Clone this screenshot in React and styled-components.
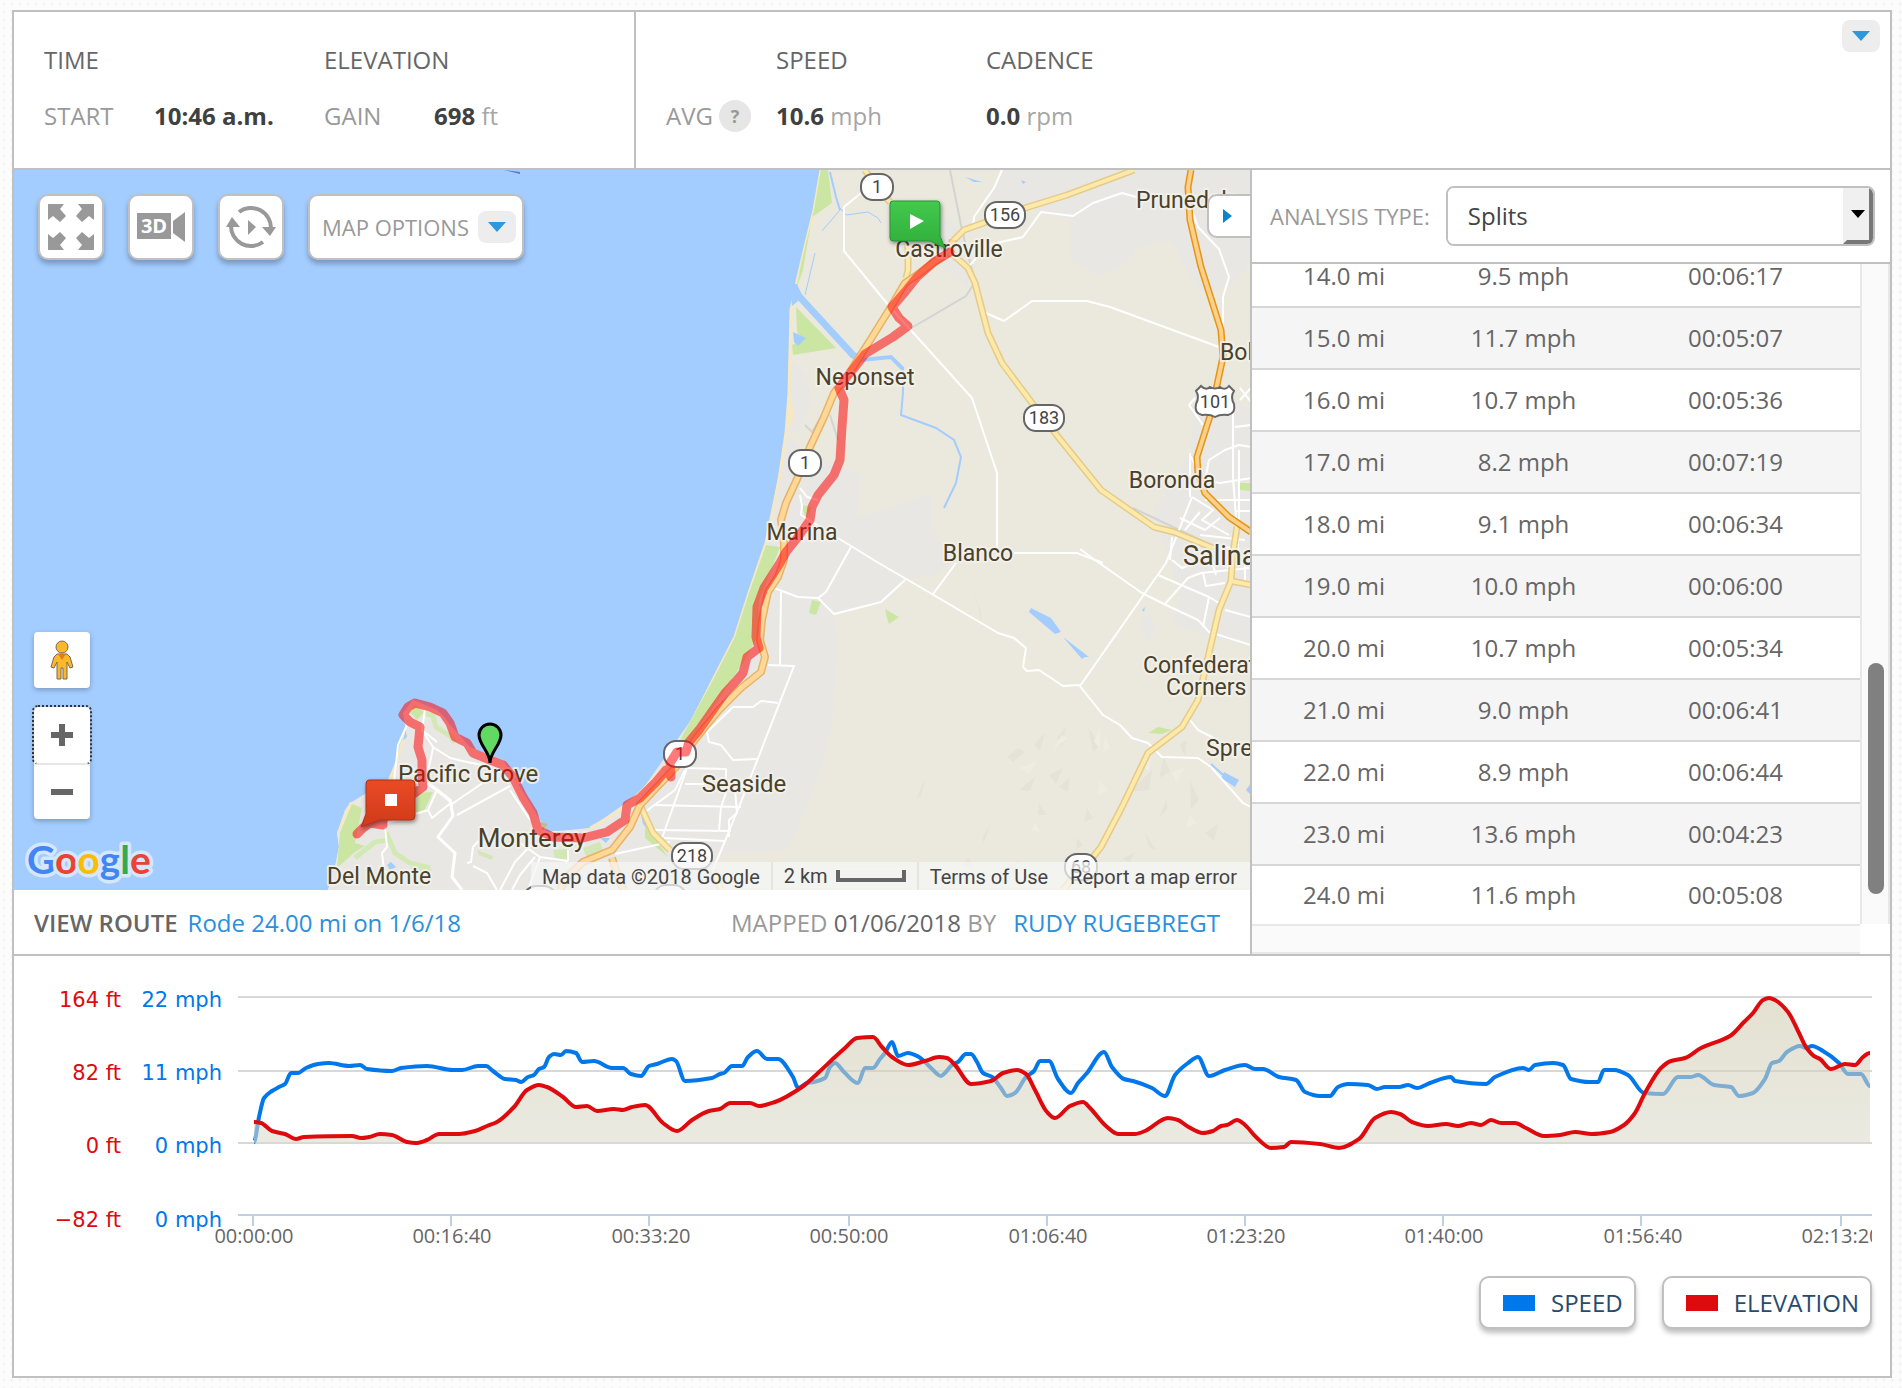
import React, { useState } from "react";
import styled, { createGlobalStyle } from "styled-components";

const splits = [
  ["14.0 mi", "9.5 mph", "00:06:17"],
  ["15.0 mi", "11.7 mph", "00:05:07"],
  ["16.0 mi", "10.7 mph", "00:05:36"],
  ["17.0 mi", "8.2 mph", "00:07:19"],
  ["18.0 mi", "9.1 mph", "00:06:34"],
  ["19.0 mi", "10.0 mph", "00:06:00"],
  ["20.0 mi", "10.7 mph", "00:05:34"],
  ["21.0 mi", "9.0 mph", "00:06:41"],
  ["22.0 mi", "8.9 mph", "00:06:44"],
  ["23.0 mi", "13.6 mph", "00:04:23"],
  ["24.0 mi", "11.6 mph", "00:05:08"],
];

const speedData =
  "254,1142 259,1117 264,1098 272,1091 279,1087 285,1084 291,1073 298,1073 306,1068 318,1064 329,1063 349,1066 360,1065 367,1069 392,1071 401,1068 427,1066 453,1070 462,1070 478,1066 486,1066 493,1071 505,1079 516,1080 521,1082 528,1077 534,1075 539,1069 544,1067 549,1057 554,1054 561,1055 566,1051 576,1053 582,1062 594,1061 612,1068 623,1068 631,1074 641,1076 649,1066 657,1064 672,1059 676,1061 685,1081 712,1078 720,1074 724,1073 732,1066 742,1066 748,1057 757,1051 767,1059 778,1059 793,1077 798,1088 807,1083 814,1082 825,1078 830,1067 835,1063 844,1072 858,1083 865,1068 873,1068 880,1059 885,1053 892,1042 898,1056 908,1053 919,1057 925,1062 931,1068 941,1076 945,1073 952,1065 958,1062 966,1054 971,1054 977,1062 983,1073 992,1077 1001,1088 1007,1096 1015,1093 1026,1077 1034,1071 1040,1061 1049,1061 1058,1079 1071,1093 1078,1083 1087,1073 1104,1052 1112,1067 1124,1079 1133,1081 1152,1088 1165,1096 1175,1075 1188,1063 1198,1057 1209,1076 1225,1070 1245,1065 1255,1069 1263,1069 1279,1077 1296,1080 1305,1092 1320,1096 1330,1096 1338,1087 1348,1084 1368,1085 1377,1089 1385,1087 1399,1087 1408,1085 1417,1088 1430,1083 1451,1077 1455,1081 1486,1084 1495,1077 1523,1068 1529,1070 1535,1065 1553,1063 1563,1065 1571,1079 1590,1082 1598,1082 1604,1070 1614,1070 1628,1075 1644,1093 1663,1094 1678,1077 1691,1077 1698,1075 1714,1085 1731,1087 1739,1096 1753,1093 1765,1079 1772,1063 1779,1061 1787,1052 1800,1046 1806,1048 1812,1046 1823,1051 1839,1063 1848,1074 1861,1074 1870,1086";

const elevationData =
  "254,1122 261,1123 272,1131 285,1134 296,1139 304,1137 352,1136 361,1138 369,1137 380,1134 392,1135 407,1142 416,1143 427,1140 439,1134 459,1134 475,1131 487,1126 497,1122 514,1107 527,1090 539,1085 547,1087 563,1097 576,1107 587,1106 597,1111 614,1109 623,1110 632,1107 645,1105 663,1123 677,1131 692,1120 709,1111 720,1109 730,1103 750,1103 759,1106 775,1102 802,1087 818,1073 835,1057 845,1048 857,1038 873,1037 882,1047 892,1057 908,1065 925,1061 939,1057 947,1058 955,1065 971,1084 991,1081 1003,1073 1017,1070 1026,1074 1035,1090 1047,1112 1055,1118 1070,1106 1083,1102 1090,1108 1106,1126 1118,1134 1135,1134 1145,1131 1168,1118 1178,1120 1187,1126 1203,1133 1213,1131 1221,1126 1227,1125 1237,1120 1245,1125 1256,1137 1271,1148 1284,1147 1291,1142 1320,1144 1339,1148 1359,1139 1375,1118 1391,1112 1400,1114 1412,1122 1428,1126 1446,1124 1458,1126 1471,1123 1481,1125 1491,1120 1501,1123 1515,1123 1526,1128 1544,1136 1560,1135 1575,1132 1592,1134 1610,1132 1624,1125 1635,1113 1645,1093 1661,1068 1671,1061 1685,1058 1701,1048 1730,1036 1744,1022 1753,1013 1763,1000 1769,998 1775,1000 1788,1012 1799,1033 1806,1047 1814,1056 1820,1059 1831,1069 1845,1064 1855,1065 1863,1057 1870,1053";

// monotone cubic through "x,y x,y ..." points
const smooth = (data) => {
  const p = data.split(" ").map((s) => s.split(",").map(Number));
  const slope = (i) => (p[i + 1][1] - p[i][1]) / (p[i + 1][0] - p[i][0]);
  const tangent = p.map((_, i) => {
    if (i === 0 || i === p.length - 1) return 0;
    const a = slope(i - 1);
    const b = slope(i);
    return a * b <= 0 ? 0 : (2 * a * b) / (a + b);
  });
  let d = `M${p[0][0]} ${p[0][1]}`;
  for (let i = 1; i < p.length; i++) {
    const h = (p[i][0] - p[i - 1][0]) / 3;
    d += `C${p[i - 1][0] + h} ${p[i - 1][1] + tangent[i - 1] * h} ${p[i][0] - h} ${p[i][1] - tangent[i] * h} ${p[i][0]} ${p[i][1]}`;
  }
  return d;
};

const yAxis = [
  { y: 1007, ft: "164 ft", mph: "22 mph" },
  { y: 1080, ft: "82 ft", mph: "11 mph" },
  { y: 1153, ft: "0 ft", mph: "0 mph" },
  { y: 1227, ft: "−82 ft", mph: "0 mph" },
];

const xAxis = [
  "00:00:00",
  "00:16:40",
  "00:33:20",
  "00:50:00",
  "01:06:40",
  "01:23:20",
  "01:40:00",
  "01:56:40",
  "02:13:20",
];

const localRoads = [
  "M1002 170L994 188 974 217 973 227",
  "M861 193L844 207V251L890 307 972 398 997 473V550",
  "M966 266L970 265 988 245 1023 237 1041 212 1073 216 1093 203 1122 193 1140 198",
  "M986 313L1004 321 1032 301H1087L1110 307 1219 347",
  "M1190 205L1198 227 1219 249 1229 277 1223 297V330",
  "M1014 553H1077L1103 563",
  "M1080 549L1095 560 1142 593 1166 605 1198 620 1209 632 1251 645",
  "M838 538L877 562 932 594 998 633 1014 638 1026 648 1023 667 1027 671 1039 670 1063 686 1079 685 1091 700 1103 715 1120 725 1132 738 1148 743 1162 757 1198 758 1211 767 1243 803 1251 807",
  "M1080 686L1166 563 1192 497",
  "M774 588L798 597 818 598 834 614 881 602 905 580",
  "M851 547L826 592 818 598",
  "M956 563L933 594",
  "M781 592L780 665M768 665L794 666 739 807 713 870",
  "M778 703L761 701 753 707H733L707 732 709 742 721 745 733 760 757 759",
  "M685 768L726 769V787M685 784H704M654 805L741 807M654 830L731 831M664 838L725 841",
  "M687 768L662 838M727 790L721 807 719 830M735 790L737 813 729 820V837",
  "M685 770L675 790 645 812",
  "M1190 720L1198 730 1218 740",
  "M800 495L802 506 801 515 838 538M800 488L807 497 818 500",
];

const cityStreets = [
  "M1192 497L1213 510 1202 520 1229 535",
  "M1180 518L1205 530 1220 518M1172 537L1170 560",
  "M1185 530L1200 512",
  "M1190 453V497M1190 455L1203 480",
  "M1233 400V477L1239 560",
  "M1251 447L1239 445 1225 450 1209 460 1205 480 1220 483 1251 478",
  "M1235 427L1251 425M1195 398L1189 405 1203 425M1240 400L1251 388M1240 388L1251 402",
  "M1239 450V527M1205 500H1251M1236 511H1251",
  "M1158 575L1209 597 1219 603",
  "M1164 605L1188 578 1201 573 1249 568",
  "M1209 597L1203 627M1225 610L1251 617",
  "M1172 560L1182 568 1202 560M1203 573L1206 586 1225 583",
  "M1210 555L1216 575M1222 548L1228 568M1245 560V580",
  "M1190 545L1235 548M1200 535L1245 540",
];

const peninsulaRoads = [
  "M425 710L422 730 433 747 450 758 467 762 487 766",
  "M422 730L437 742M433 748L427 777M407 725L398 745 394 782",
  "M427 783L452 803V815M452 804L487 780 503 768M457 815L510 786",
  "M387 823L428 810 432 818 452 802M428 810L437 790",
  "M385 827L387 847 382 853 384 870 390 877",
  "M533 843L515 862 500 890M520 843L540 857 568 861",
  "M487 832L473 847 471 862 467 863M473 866L487 873 497 890",
  "M535 857L520 875 512 890M540 857L528 890M568 850V861",
  "M615 854L670 842M510 790L530 820",
];

const places = [
  { x: 949, y: 257, label: "Castroville" },
  { x: 865, y: 385, label: "Neponset" },
  { x: 802, y: 540, label: "Marina" },
  { x: 978, y: 561, label: "Blanco" },
  { x: 1172, y: 488, label: "Boronda" },
  { x: 744, y: 792, label: "Seaside", size: 24 },
  { x: 468, y: 782, label: "Pacific Grove", size: 24 },
  { x: 532, y: 847, label: "Monterey", size: 26 },
  { x: 379, y: 884, label: "Del Monte" },
];

// these run out of the right edge of the map
const edgePlaces = [
  { x: 1136, y: 208, label: "Prunedale" },
  { x: 1220, y: 360, label: "Bolsa" },
  { x: 1183, y: 565, label: "Salinas", size: 27 },
  { x: 1143, y: 673, label: "Confederate" },
  { x: 1166, y: 695, label: "Corners" },
  { x: 1206, y: 756, label: "Spreckels" },
];

const shields = [
  { x: 877, y: 187, label: "1" },
  { x: 1005, y: 215, label: "156" },
  { x: 1044, y: 418, label: "183" },
  { x: 805, y: 463, label: "1" },
  { x: 680, y: 754, label: "1" },
  { x: 692, y: 856, label: "218" },
  { x: 1081, y: 867, label: "68" },
  { x: 540, y: 899, label: "" },
  { x: 670, y: 898, label: "" },
];

const ridePath =
  "M950 252L934 262 917 277 905 292 892 307 899 318 908 326 893 337 865 354 855 367 846 378 839 388 844 400 842 427 840 460 834 475 818 495 812 507 810 520 798 537 786 552 780 563 764 588 757 607 756 637 759 648 747 657 743 673 737 680 725 693 713 710 699 730 689 742 686 752 677 752 670 763 671 777 666 770 656 782 640 798 627 805 625 820 607 832 583 838 553 837 538 830 533 813 523 797 513 777 503 765 490 760 473 753 467 743 455 737 450 723 443 713 430 707 415 703 408 707 403 715 410 722 420 727 418 747 422 760V777L423 787 415 793 400 798 383 805 383 825 370 823 363 828 357 834";

const coast =
  "M821 170L814 210 805 247 800 270 795 290 792 310 790 360 789 393 786 433 779 480 772 517 766 543 759 563 749 593 735 637 713 680 691 720 679 747 664 767 640 793 617 813 590 828 580 830 547 832 538 823 530 803 523 795 513 777 503 760 487 756 470 747 453 735 447 720 437 710 413 700 403 713 406 723 407 737 400 743 397 758 395 770 388 780 367 803 350 803 345 810 337 833 339 847 335 867 328 890";

const yellowRoads = [
  "M865 170L877 188 890 202M908 243V270L906 278",
  "M640 805L653 833 670 850M713 870L721 890",
  "M1134 170L1067 195 1025 208 964 230 954 240 950 252 968 268 975 283 988 333 1002 363 1035 407 1059 438 1101 490 1154 527 1174 532 1213 548",
  "M1251 585L1231 581 1219 610 1209 653 1198 700 1182 727 1148 753 1122 807 1101 847 1093 857 1071 880 1063 890M1237 527L1233 553 1231 581",
];

const orangeRoad =
  "M953 240L950 252 934 262 917 275 905 283 889 310 869 342 850 372 834 393 824 417 810 447 798 477 786 503 781 520 784 543V560L778 577 768 592 762 620 760 640 765 657 761 672 741 688 719 710 705 727 691 745 676 767 640 805 630 827 612 850 583 862 567 877 560 890M612 858L620 883 624 890";

const motorway =
  "M1191 170L1188 187 1190 220 1201 267 1221 330 1223 357 1211 413 1197 457 1198 473 1205 493 1229 517 1251 532";

const RouteMap = () => (
  <MapDrawing
    viewBox="14 170 1236 720"
    preserveAspectRatio="xMaxYMin slice"
    role="img"
    aria-label="Route map from Castroville to Del Monte"
  >
    <rect x="-2000" y="170" width="5000" height="800" fill="#a3ccff" />
    <path d="M504 170L520 172 520 174 508 171Z" fill="#4a7fd0" />
    <path d={`${coast}H1260V170Z`} fill="#ebe9dd" />

    {/* built-up areas */}
    <g fill="#e8e7e4">
      <path d="M735 637L766 543 786 433 806 453 850 470 861 477 857 517 893 507 932 493 932 527 952 560 935 575 901 580 881 603 834 614 838 647 832 727 818 777 798 827 786 850 720 853 712 890H328L335 867 339 847 337 833 350 803 388 780 407 737 403 713 413 700 437 710 470 747 503 760 530 803 547 832 590 828 640 793 691 720Z" />
      <path d="M1002 170H1251V263L1229 287 1201 293 1170 240 1134 250 1126 263 1099 277 1071 260V220L1020 205 990 200Z" />
      <path d="M933 210L952 220 972 253 968 287 940 267Z" />
      <path d="M1190 453L1154 510 1158 530 1170 560 1180 600 1172 623 1209 637 1251 645V410L1225 393 1194 410Z" />
      <path d="M790 360L806 375 812 400 800 430 786 433ZM1140 620L1150 612 1156 632 1147 642Z" />
    </g>

    <g fill="#e5e3d7">
      <path d="M1007 757L1018 748 1025 752 1013 762ZM1019 790L1035 777 1030 791ZM1057 738L1066 727 1062 747ZM1049 775L1063 768 1056 784ZM1088 727L1100 745 1093 752ZM1129 792L1152 770 1149 790ZM1164 757L1170 772 1159 778ZM1087 808L1093 818 1084 822ZM1039 802L1046 815 1038 815ZM982 838L990 824 984 843ZM1145 833L1156 850 1149 847ZM1190 780L1199 800 1191 809ZM1166 800L1160 817 1168 808ZM968 857L962 865 975 869ZM1122 859L1135 852 1130 862ZM1045 732L1034 745 1040 751ZM972 588L981 612V622L978 606Z" />
      <path d="M1070 777L1059 787 1068 792ZM1205 833L1218 824 1214 841ZM916 799L926 777 921 796ZM1009 866L1019 860 1013 876ZM1077 838L1083 845 1076 850ZM1180 745L1187 740 1185 756Z" />
    </g>
    <g fill="#efede3">
      <path d="M1100 728V750L1094 741ZM1062 735L1052 750 1068 738ZM1143 765L1152 755 1149 772ZM1172 772L1184 768 1176 783ZM1020 768L1037 761 1029 773ZM1100 780L1107 790 1098 796ZM1190 815L1197 823 1186 828ZM1035 822L1040 832 1032 830ZM1105 735L1110 748 1103 752Z" />
    </g>

    {/* beaches and parks */}
    <path
      d="M821 170L814 210 805 247 795 290 791 310 789 393 786 433 779 480 766 543 749 593 735 637 713 680 679 747 664 767 640 793 617 813 590 828"
      fill="none"
      stroke="#f5e8c3"
      strokeWidth="3"
    />
    <path d="M789 393L795 415 786 433ZM337 833L350 802 362 808M407 725L400 745 397 758 388 780 394 781 402 745Z" fill="#f5e8c3" />
    <g fill="#cbe6a3">
      <path d="M821 170H828L830 187 832 203 818 213 812 217 803 270 796 290 802 260 814 210Z" />
      <path d="M796 307L836 348 793 355 792 345 802 340 797 332Z" />
      <path d="M766 545L780 547 770 573 759 600 757 637 745 660 725 690 699 727 689 742 679 742 713 680 735 637 749 593Z" />
      <path d="M812 600L821 602 816 615 809 613ZM885 609L899 617 889 624 887 618ZM1148 733L1158 727 1172 730 1162 734Z" />
      <path d="M417 793L433 792 423 813 416 812ZM410 712L415 705 424 712 417 720ZM801 505L812 507 806 518Z" />
      <path d="M352 804L362 808 355 843 365 846 355 852 337 868 340 833ZM1240 483H1251V491L1240 490ZM645 825L655 838 668 857 645 838Z" />
      <path d="M553 850L567 849V860L555 858ZM583 848L600 842 604 853 588 860Z" opacity="0.7" />
      <path d="M477 850L493 856 492 860 479 855ZM409 868L420 864 433 870 420 872Z" opacity="0.7" />
    </g>
    <path
      d="M424 713L433 716 436 727 450 736 455 742M355 858L375 842 388 840M386 832L395 853 410 863 430 868"
      fill="none"
      stroke="#d3e9b4"
      strokeWidth="5"
    />
    <path d="M540 822L548 824 543 830Z" fill="#c9b78c" />

    {/* rivers and lakes */}
    <g fill="none" stroke="#a3ccff">
      <path d="M797 294L853 355 861 360" strokeWidth="7" />
      <path d="M861 360L891 357 903 369" strokeWidth="4" />
      <path d="M903 368V393L901 415 936 428 954 440 961 457 956 483 944 508" strokeWidth="2" />
      <path d="M840 208L846 215 868 212 878 218 881 223M840 210L822 231M815 253L805 295" strokeWidth="1" />
      <path d="M830 172L836 197 840 210M1211 764L1232 783" strokeWidth="2" />
    </g>
    <g fill="#a3ccff">
      <path d="M790 284H797L803 297 792 306ZM1031 608L1051 618 1061 632 1055 634 1029 612ZM1063 637L1089 657 1085 657 1082 659ZM1224 772L1239 780 1235 787 1221 778ZM965 177L982 182 974 182ZM1021 180L1026 182 1023 184ZM793 332L806 338 798 346 794 342ZM1145 607L1144 612 1142 610ZM387 865L391 862 396 867 390 870ZM600 838H610L606 843ZM1246 790L1251 783V795ZM641 815L648 829 643 824Z" />
    </g>

    <g fill="none" stroke="#d3d3d3" strokeWidth="2">
      <path d="M950 170L962 230 975 282 966 296 908 330M805 425L812 432 830 402 839 388M830 415L838 440M1133 508L1211 545" />
    </g>
    <g fill="none" stroke="#fff" strokeWidth="2" strokeLinejoin="round">
      {[...localRoads, ...cityStreets, ...peninsulaRoads].map((d) => (
        <path key={d} d={d} />
      ))}
      <path
        d="M428 783L450 800 453 816 438 837 455 853 452 877 462 890"
        strokeWidth="3"
      />
    </g>

    <g fill="none" strokeLinejoin="round">
      {yellowRoads.map((d) => (
        <path key={d} d={d} stroke="#e3cb8a" strokeWidth="7" />
      ))}
      {yellowRoads.map((d) => (
        <path key={d} d={d} stroke="#ffe9a8" strokeWidth="4" />
      ))}
      <path d={orangeRoad} stroke="#e6b468" strokeWidth="8" />
      <path d={orangeRoad} stroke="#ffd796" strokeWidth="5" />
      <path d={motorway} stroke="#e59416" strokeWidth="7" />
      <path d={motorway} stroke="#fdd08a" strokeWidth="4" />
    </g>

    <g stroke="#666" strokeWidth="2" fill="#fff">
      {shields.map(({ x, y, label }) => {
        const width = label.length > 2 ? 40 : 32;
        return (
          <g key={`${x}-${y}`}>
            <rect x={x - width / 2} y={y - 13} width={width} height="26" rx="12" />
            <ShieldText x={x} y={y + 6}>
              {label}
            </ShieldText>
          </g>
        );
      })}
      <path d="M1201 386Q1206 391 1210 387 1215 390 1220 387 1225 391 1229 386L1234 391Q1230 397 1234 404 1236 413 1228 415 1220 414 1215 417 1210 414 1202 415 1194 413 1196 404 1200 397 1196 391Z" />
      <ShieldText x="1215" y="408">
        101
      </ShieldText>
    </g>

    {places.map(({ x, y, label, size }) => (
      <PlaceName key={label} x={x} y={y} $size={size}>
        {label}
      </PlaceName>
    ))}
    {edgePlaces.map(({ x, y, label, size }) => (
      <PlaceName key={label} x={x} y={y} $size={size} $start>
        {label}
      </PlaceName>
    ))}

    <path
      d={ridePath}
      fill="none"
      stroke="#ff0000"
      strokeOpacity="0.52"
      strokeWidth="9"
      strokeLinejoin="round"
      strokeLinecap="round"
    />

    <defs>
      <linearGradient id="startFill" x1="0" y1="0" x2="0" y2="1">
        <stop offset="0" stopColor="#43c94d" />
        <stop offset="1" stopColor="#2fae3b" />
      </linearGradient>
      <linearGradient id="stopFill" x1="0" y1="0" x2="0" y2="1">
        <stop offset="0" stopColor="#ea4a25" />
        <stop offset="1" stopColor="#cf3a1b" />
      </linearGradient>
      <filter id="pinShadow" x="-20%" y="-20%" width="150%" height="150%">
        <feDropShadow dx="1" dy="2" stdDeviation="2" floodOpacity="0.45" />
      </filter>
    </defs>
    <path
      d="M893 201H937Q940 201 940 204V236L945 248 930 241H893Q890 241 890 238V204Q890 201 893 201Z"
      fill="url(#startFill)"
      stroke="#27933a"
      filter="url(#pinShadow)"
    />
    <path d="M910 214L924 221 910 229Z" fill="#fff" />
    <path
      d="M369 780H411Q415 780 415 784V816Q415 820 411 820H380L361 827 366 814V784Q366 780 369 780Z"
      fill="url(#stopFill)"
      stroke="#b03114"
      filter="url(#pinShadow)"
    />
    <rect x="385" y="794" width="12" height="12" fill="#fff" />
    <path
      d="M490 763C490 752 479 745 479 735A11 11 0 0 1 501 735C501 745 490 752 490 763Z"
      fill="#62d962"
      stroke="#000"
      strokeWidth="3"
    />
  </MapDrawing>
);

const Chart = () => (
  <ChartDrawing viewBox="14 956 1858 304" role="img" aria-label="Speed and elevation over time">
    <defs>
      <linearGradient id="areaFill" x1="0" y1="0" x2="0" y2="1">
        <stop offset="0" stopColor="#cfcbae" />
        <stop offset="1" stopColor="#dddbcd" />
      </linearGradient>
    </defs>
    <g stroke="#d8d8d8" strokeWidth="2">
      <path d="M238 997H1872M238 1071H1872M238 1143H1872" />
    </g>
    <path
      d="M238 1215H1872M253 1215V1226M451 1215V1226M649 1215V1226M849 1215V1226M1047 1215V1226M1245 1215V1226M1443 1215V1226M1641 1215V1226M1841 1215V1226"
      stroke="#c0d0e0"
      strokeWidth="2"
    />
    <path d={smooth(speedData)} fill="none" stroke="#0077ea" strokeWidth="4" strokeLinejoin="round" />
    <path
      d={`${smooth(elevationData)}V1143H254Z`}
      fill="url(#areaFill)"
      fillOpacity="0.58"
    />
    <path d={smooth(elevationData)} fill="none" stroke="#de0a0e" strokeWidth="4" strokeLinejoin="round" />
    {yAxis.map(({ y, ft, mph }) => (
      <g key={y}>
        <AxisValue x="121" y={y} $color="#de0a0e">
          {ft}
        </AxisValue>
        <AxisValue x="222" y={y} $color="#0077ea">
          {mph}
        </AxisValue>
      </g>
    ))}
    {xAxis.map((time, i) => (
      <AxisTime key={time} x={254 + Math.round(i * 198.4)} y="1243">
        {time}
      </AxisTime>
    ))}
  </ChartDrawing>
);

const FullscreenIcon = () => (
  <svg width="46" height="46" viewBox="0 0 46 46" fill="#999">
    {[0, 90, 180, 270].map((angle) => (
      <path
        key={angle}
        transform={`rotate(${angle} 23 23)`}
        d="M0 0H16L12 5 18 12 12 18 5 12 0 16Z"
      />
    ))}
  </svg>
);

const CameraIcon = () => (
  <svg width="48" height="30" viewBox="0 0 48 30" fill="#999">
    <path d="M0 1H34V27H0ZM36 9L48 0V30L36 21Z" />
    <CameraText x="17" y="21">
      3D
    </CameraText>
  </svg>
);

const ReplayIcon = () => (
  <svg width="50" height="44" viewBox="0 0 50 44" fill="none" stroke="#999" strokeWidth="4">
    <path d="M13 7A20 20 0 0 1 45 24M37 37A20 20 0 0 1 5 20" />
    <path d="M0 22L6 12 14 22ZM36 22H50L44 31ZM22 15L30 22 22 30Z" fill="#999" stroke="none" />
  </svg>
);

const Pegman = () => (
  <svg width="24" height="40" viewBox="0 0 24 40" fill="#fbb829" stroke="#79675a">
    <path d="M7 14H17L20 17 23 27 20 28 17 22V39H13V28H11V39H7V22L4 28 1 27 4 17Z" />
    <path d="M8 14H16L12 20Z" fill="#e47a1c" stroke="none" />
    <circle cx="12" cy="7" r="6" />
  </svg>
);

const DownTriangle = () => (
  <svg width="18" height="10" viewBox="0 0 18 10">
    <path d="M0 0H18L9 10Z" fill="#2f97dc" />
  </svg>
);

const GoogleLogo = () => (
  <LogoDrawing width="150" height="56" viewBox="0 0 150 56" aria-label="Google">
    <text x="5" y="40">
      <tspan fill="#4285f4">G</tspan>
      <tspan fill="#ea4335">o</tspan>
      <tspan fill="#fbbc05">o</tspan>
      <tspan fill="#4285f4">g</tspan>
      <tspan fill="#34a853">l</tspan>
      <tspan fill="#ea4335">e</tspan>
    </text>
  </LogoDrawing>
);

const App = () => {
  const [analysis, setAnalysis] = useState("Splits");

  return (
    <>
      <GlobalStyle />
      <Frame>
        <Summary>
          <TotalsPanel>
            <Heading>TIME</Heading>
            <Heading>ELEVATION</Heading>
            <Caption>START</Caption>
            <Value>10:46 a.m.</Value>
            <Caption>GAIN</Caption>
            <Value>
              698 <Unit>ft</Unit>
            </Value>
          </TotalsPanel>
          <AveragesPanel>
            <span />
            <Heading>SPEED</Heading>
            <Heading>CADENCE</Heading>
            <Caption>
              AVG <HelpButton type="button" aria-label="About averages">?</HelpButton>
            </Caption>
            <Value>
              10.6 <Unit>mph</Unit>
            </Value>
            <Value>
              0.0 <Unit>rpm</Unit>
            </Value>
          </AveragesPanel>
          <ExpandButton type="button" aria-label="Show more stats">
            <DownTriangle />
          </ExpandButton>
        </Summary>

        <Main>
          <MapColumn>
            <MapArea>
              <RouteMap />
              <Toolbar>
                <ToolButton type="button" aria-label="Full screen">
                  <FullscreenIcon />
                </ToolButton>
                <ToolButton type="button" aria-label="3D view">
                  <CameraIcon />
                </ToolButton>
                <ToolButton type="button" aria-label="Replay">
                  <ReplayIcon />
                </ToolButton>
                <OptionsButton type="button">
                  MAP OPTIONS
                  <ArrowChip>
                    <DownTriangle />
                  </ArrowChip>
                </OptionsButton>
              </Toolbar>
              <MapControls>
                <StreetViewButton type="button" aria-label="Street view">
                  <Pegman />
                </StreetViewButton>
                <ZoomGroup>
                  <ZoomButton type="button" aria-label="Zoom in" $focused>
                    <svg width="22" height="22" viewBox="0 0 22 22">
                      <path d="M0 8H8V0H14V8H22V14H14V22H8V14H0Z" fill="#666" />
                    </svg>
                  </ZoomButton>
                  <ZoomButton type="button" aria-label="Zoom out">
                    <svg width="22" height="22" viewBox="0 0 22 22">
                      <path d="M0 8H22V14H0Z" fill="#666" />
                    </svg>
                  </ZoomButton>
                </ZoomGroup>
                <GoogleLogo />
              </MapControls>
              <Attribution>
                <span>Map data ©2018 Google</span>
                <ScaleLabel>
                  2 km <ScaleBar />
                </ScaleLabel>
                <a href="#terms">Terms of Use</a>
                <a href="#report">Report a map error</a>
              </Attribution>
              <CollapseTab type="button" aria-label="Collapse panel">
                <svg width="9" height="14" viewBox="0 0 9 14">
                  <path d="M0 0L9 7 0 14Z" fill="#0a84cc" />
                </svg>
              </CollapseTab>
            </MapArea>
            <RouteBar>
              <div>
                <strong>VIEW ROUTE</strong>
                <RouteLink href="#route">Rode 24.00 mi on 1/6/18</RouteLink>
              </div>
              <Mapped>
                MAPPED <time>01/06/2018</time> BY
                <AuthorLink href="#author">RUDY RUGEBREGT</AuthorLink>
              </Mapped>
            </RouteBar>
          </MapColumn>

          <Sidebar>
            <AnalysisBar>
              <label htmlFor="analysis">ANALYSIS TYPE:</label>
              <SelectBox>
                <select
                  id="analysis"
                  value={analysis}
                  onChange={(e) => setAnalysis(e.target.value)}
                >
                  <option>Splits</option>
                  <option>Climbs</option>
                </select>
                <SelectArrow>
                  <svg width="14" height="8" viewBox="0 0 14 8">
                    <path d="M0 0H14L7 8Z" fill="#000" />
                  </svg>
                </SelectArrow>
              </SelectBox>
            </AnalysisBar>
            <SplitsArea>
              <SplitsViewport>
                <SplitsTable>
                  <colgroup>
                    <col width="184" />
                    <col width="175" />
                    <col width="249" />
                  </colgroup>
                  <tbody>
                    {splits.map(([distance, pace, time]) => (
                      <tr key={distance}>
                        <td>{distance}</td>
                        <td>{pace}</td>
                        <td>{time}</td>
                      </tr>
                    ))}
                  </tbody>
                </SplitsTable>
              </SplitsViewport>
              <ScrollTrack>
                <ScrollThumb />
              </ScrollTrack>
              <BottomTrack />
            </SplitsArea>
          </Sidebar>
        </Main>

        <ChartPanel>
          <Chart />
          <Legend>
            <LegendButton type="button">
              <Swatch $color="#0077ea" />
              SPEED
            </LegendButton>
            <LegendButton type="button">
              <Swatch $color="#de0a0e" />
              ELEVATION
            </LegendButton>
          </Legend>
        </ChartPanel>
      </Frame>
    </>
  );
};

const GlobalStyle = createGlobalStyle`
  * {
    box-sizing: border-box;
  }

  body {
    margin: 0;
    font-family: "Open Sans", "Noto Sans", sans-serif;
    font-size: 24px;
    line-height: 32px;
    color: #666;
    background-color: #fcfcfc;
    background-image: radial-gradient(#f3f3f3 1px, transparent 2px);
    background-size: 8px 8px;
  }

  button,
  select {
    font: inherit;
    color: inherit;
    padding: 0;
    cursor: pointer;
  }

  a {
    text-decoration: none;
  }

  svg {
    display: block;
  }
`;

const Frame = styled.main`
  margin: 10px 10px 10px 12px;
  border: 2px solid #c0c0c0;
  background: #fff;
`;

const Summary = styled.section`
  position: relative;
  display: flex;
  border-bottom: 2px solid #c0c0c0;
`;

const TotalsPanel = styled.div`
  display: grid;
  grid-template-columns: 110px 170px 110px 1fr;
  row-gap: 24px;
  width: 622px;
  padding: 32px 30px 36px;
  border-right: 2px solid #c0c0c0;
`;

const AveragesPanel = styled.div`
  display: grid;
  grid-template-columns: 110px 210px 210px;
  row-gap: 24px;
  padding: 32px 30px 36px;
`;

const Heading = styled.div`
  ${TotalsPanel} & {
    grid-column: span 2;
  }
`;

const Caption = styled.div`
  display: flex;
  align-items: center;
  gap: 6px;
  color: #999;
`;

const Value = styled.div`
  font-weight: 700;
  color: #404040;
`;

const Unit = styled.span`
  font-weight: 400;
  color: #a6a6a6;
`;

const HelpButton = styled.button`
  width: 32px;
  height: 32px;
  border: 0;
  border-radius: 50%;
  background: #e6e6e6;
  font-size: 18px;
  font-weight: 700;
  line-height: 32px;
  color: #999;
`;

const ExpandButton = styled.button`
  position: absolute;
  top: 8px;
  right: 10px;
  display: grid;
  place-items: center;
  width: 38px;
  height: 32px;
  border: 0;
  border-radius: 8px;
  background: #ededed;
`;

const Main = styled.div`
  display: flex;
  border-bottom: 2px solid #c0c0c0;
`;

const MapColumn = styled.div`
  flex: 1;
  min-width: 0;
  display: flex;
  flex-direction: column;
`;

const MapArea = styled.section`
  position: relative;
  flex: 1;
  min-height: 720px;
  overflow: hidden;
`;

const MapDrawing = styled.svg`
  position: absolute;
  width: 100%;
  height: 100%;
`;

const PlaceName = styled.text`
  font-family: Roboto, sans-serif;
  font-size: ${({ $size }) => $size || 23}px;
  fill: #4a412b;
  stroke: #f3f2ec;
  stroke-width: 4px;
  stroke-opacity: 0.85;
  stroke-linejoin: round;
  paint-order: stroke;
  text-anchor: ${({ $start }) => ($start ? "start" : "middle")};
`;

const ShieldText = styled.text`
  font-family: Roboto, sans-serif;
  font-size: 18px;
  fill: #444;
  stroke: none;
  text-anchor: middle;
`;

const Toolbar = styled.div`
  position: absolute;
  top: 24px;
  left: 24px;
  display: flex;
  gap: 24px;
`;

const ToolButton = styled.button`
  display: grid;
  place-items: center;
  width: 66px;
  height: 66px;
  border: 2px solid #c0c0c0;
  border-radius: 10px;
  background: #fff;
  box-shadow: 0 4px 5px rgba(0, 0, 0, 0.25);
`;

const OptionsButton = styled(ToolButton)`
  display: flex;
  align-items: center;
  justify-content: space-between;
  width: 216px;
  padding: 0 6px 0 12px;
  font-size: 22px;
  color: #999;
`;

const ArrowChip = styled.span`
  display: grid;
  place-items: center;
  width: 38px;
  height: 32px;
  border-radius: 8px;
  background: #ededed;
`;

const CameraText = styled.text`
  font-size: 20px;
  font-weight: 700;
  fill: #fff;
  text-anchor: middle;
`;

const MapControls = styled.div`
  position: absolute;
  bottom: 0;
  left: 8px;
  display: flex;
  flex-direction: column;
`;

const StreetViewButton = styled.button`
  display: grid;
  place-items: center;
  width: 56px;
  height: 56px;
  margin: 0 0 19px 12px;
  border: 0;
  border-radius: 4px;
  background: #fff;
  box-shadow: 0 2px 5px rgba(0, 0, 0, 0.25);
`;

const ZoomGroup = styled.div`
  display: flex;
  flex-direction: column;
  width: 56px;
  margin: 0 0 15px 12px;
  border-radius: 4px;
  background: #fff;
  box-shadow: 0 2px 5px rgba(0, 0, 0, 0.25);
`;

const ZoomButton = styled.button`
  display: grid;
  place-items: center;
  height: 56px;
  border: 0;
  border-top: ${({ $focused }) => ($focused ? "0" : "2px solid #e6e6e6")};
  border-radius: 4px;
  background: none;
  outline: ${({ $focused }) => ($focused ? "2px dotted #333" : "none")};
`;

const LogoDrawing = styled.svg`
  font-family: Lato, sans-serif;
  font-size: 39px;
  font-weight: 700;
  stroke: #d4e7fc;
  stroke-width: 7px;
  stroke-linejoin: round;
  paint-order: stroke;
`;

const Attribution = styled.div`
  position: absolute;
  right: 0;
  bottom: 0;
  display: flex;
  height: 28px;
  padding-right: 2px;
  background: rgba(245, 245, 245, 0.75);
  font-family: Roboto, sans-serif;
  font-size: 20px;
  line-height: 30px;
  color: #444;

  > * {
    padding: 0 11px;
    color: inherit;
  }

  > * + * {
    border-left: 2px solid #e6e4dc;
  }

  > :last-child {
    border-left: 0;
  }
`;

const ScaleLabel = styled.span`
  display: flex;
  align-items: center;
  gap: 8px;
`;

const ScaleBar = styled.span`
  width: 70px;
  height: 12px;
  border: 4px solid #666;
  border-top: 0;
  outline: 1px solid #f5f5f5;
`;

const CollapseTab = styled.button`
  position: absolute;
  top: 24px;
  right: 0;
  display: flex;
  align-items: center;
  width: 43px;
  height: 44px;
  padding-left: 14px;
  border: 2px solid #c0c0c0;
  border-right: 0;
  border-radius: 10px 0 0 10px;
  background: #fff;
`;

const RouteBar = styled.div`
  display: flex;
  justify-content: space-between;
  padding: 17px 30px 15px 20px;

  strong {
    font-weight: 600;
  }
`;

const RouteLink = styled.a`
  margin-left: 10px;
  color: #2b8fdb;
`;

const Mapped = styled.div`
  color: #999;

  time {
    color: #666;
  }
`;

const AuthorLink = styled.a`
  margin-left: 17px;
  color: #2b8fdb;
`;

const Sidebar = styled.aside`
  display: flex;
  flex-direction: column;
  width: 640px;
  border-left: 2px solid #c0c0c0;
`;

const AnalysisBar = styled.div`
  display: flex;
  align-items: center;
  gap: 16px;
  padding: 16px 15px 16px 18px;
  border-bottom: 2px solid #c0c0c0;

  label {
    font-size: 22px;
    white-space: nowrap;
    color: #999;
  }
`;

const SelectBox = styled.div`
  position: relative;
  flex: 1;
  border: 2px solid #c0c0c0;
  border-radius: 8px;
  overflow: hidden;

  select {
    display: block;
    width: 100%;
    height: 56px;
    padding: 0 20px;
    border: 0;
    background: #fff;
    color: #444;
    appearance: none;
  }
`;

const SelectArrow = styled.span`
  position: absolute;
  top: 0;
  right: 0;
  bottom: 0;
  display: grid;
  place-items: center;
  width: 30px;
  border: solid #777;
  border-width: 0 4px 4px 0;
  border-left: 4px solid #f0f0f0;
  background: #f0f0f0;
  pointer-events: none;
`;

const SplitsArea = styled.div`
  display: grid;
  grid-template-columns: 1fr 30px;
  grid-template-rows: 660px 30px;
`;

// list stays scrolled to its last split
const SplitsViewport = styled.div`
  display: flex;
  flex-direction: column;
  justify-content: flex-end;
  overflow: hidden;
`;

const SplitsTable = styled.table`
  width: 100%;
  table-layout: fixed;
  border-collapse: separate;
  border-spacing: 0;
  text-align: center;

  tr:nth-child(even) {
    background: #f5f5f5;
  }

  td {
    height: 62px;
    padding: 0;
    border-bottom: 2px solid #d6d6d6;
  }

  tr:last-child td {
    height: 58px;
    border: 0;
  }
`;

const ScrollTrack = styled.div`
  padding: 399px 0 0 6px;
  border: solid #e8e8e8;
  border-width: 0 2px;
  background: #fafafa;
`;

const ScrollThumb = styled.div`
  width: 16px;
  height: 231px;
  border-radius: 8px;
  background: #808080;
`;

const BottomTrack = styled.div`
  border: solid #e8e8e8;
  border-width: 2px 0;
  background: #fafafa;
`;

const ChartPanel = styled.section`
  padding: 0 18px 47px 0;
`;

const ChartDrawing = styled.svg`
  width: 100%;
  height: auto;
`;

const AxisValue = styled.text`
  font-family: "DejaVu Sans", sans-serif;
  font-size: 21px;
  fill: ${({ $color }) => $color};
  text-anchor: end;
`;

const AxisTime = styled.text`
  font-size: 20px;
  fill: #666;
  text-anchor: middle;
`;

const Legend = styled.div`
  display: flex;
  justify-content: flex-end;
  gap: 26px;
  margin-top: 16px;
`;

const LegendButton = styled.button`
  display: flex;
  align-items: center;
  gap: 16px;
  height: 53px;
  padding: 0 11px 0 22px;
  border: 2px solid #c0c0c0;
  border-radius: 10px;
  background: #fff;
  box-shadow: 0 4px 5px rgba(0, 0, 0, 0.25);
  color: #274b6d;
`;

const Swatch = styled.span`
  width: 32px;
  height: 16px;
  background: ${({ $color }) => $color};
`;

export default App;
